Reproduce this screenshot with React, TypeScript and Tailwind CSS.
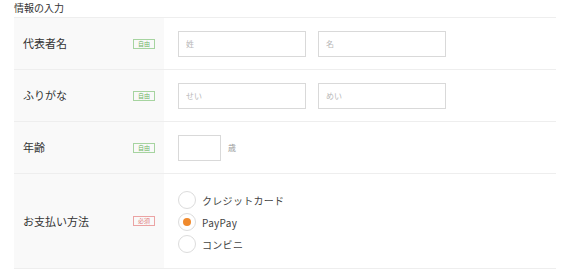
import React from 'react';

const font = { fontFamily: '"Noto Sans CJK JP", "Noto Sans", sans-serif' };

function Badge({ required }: { required?: boolean }) {
    return (
        <span
            className={
                'flex h-[10px] w-[22px] items-center justify-center border text-[6px] leading-none ' +
                (required ? 'border-[#eba3a3] text-[#e27a7a]' : 'border-[#a6d4a0] text-[#6fb567]')
            }
        >
            {required ? '必須' : '自由'}
        </span>
    );
}

function Row({ label, required, tall, children }: { label: string; required?: boolean; tall?: boolean; children: React.ReactNode }) {
    return (
        <div className={'flex border-b border-[#eeeeee] ' + (tall ? 'h-[95px]' : 'h-[52px]')}>
            <div className="flex w-[150px] items-center justify-between bg-[#f9f9f9] pl-[9px] pr-[9px]">
                <span className="text-[11px] text-[#333]">{label}</span>
                <Badge required={required} />
            </div>
            <div className="flex flex-1 items-center pl-[14px]">{children}</div>
        </div>
    );
}

function TextBox({ placeholder, w = 'w-[128px]' }: { placeholder?: string; w?: string }) {
    return (
        <input
            placeholder={placeholder}
            className={w + ' h-[26px] border border-[#d9d9d9] bg-white px-[7px] text-[8px] text-[#333] outline-none placeholder:text-[#b8b8b8]'}
        />
    );
}

function Radio({ label, checked }: { label: string; checked?: boolean }) {
    return (
        <label className="flex items-center gap-[6px]">
            <span className="flex h-[18px] w-[18px] items-center justify-center rounded-full border border-[#dcdcdc] bg-white">
                {checked && <span className="h-[8px] w-[8px] rounded-full bg-[#f08a2d]" />}
            </span>
            <span className="text-[10px] tracking-[0.3px] text-[#444]">{label}</span>
        </label>
    );
}

export default function App() {
    return (
        <div className="h-[275px] w-[570px] bg-white px-[14px]" style={font}>
            <h2 className="h-[17px] pt-[1px] text-[10px] leading-[14px] text-[#333]">情報の入力</h2>

            <div className="border-t border-[#eeeeee]">
                <Row label="代表者名">
                    <div className="flex gap-[12px]">
                        <TextBox placeholder="姓" />
                        <TextBox placeholder="名" />
                    </div>
                </Row>

                <Row label="ふりがな">
                    <div className="flex gap-[12px]">
                        <TextBox placeholder="せい" />
                        <TextBox placeholder="めい" />
                    </div>
                </Row>

                <Row label="年齢">
                    <TextBox w="w-[43px]" />
                    <span className="ml-[7px] text-[8px] text-[#999]">歳</span>
                </Row>

                <Row label="お支払い方法" required tall>
                    <div className="flex flex-col gap-[4px] pt-[2px]">
                        <Radio label="クレジットカード" />
                        <Radio label="PayPay" checked />
                        <Radio label="コンビニ" />
                    </div>
                </Row>
            </div>
        </div>
    );
}
